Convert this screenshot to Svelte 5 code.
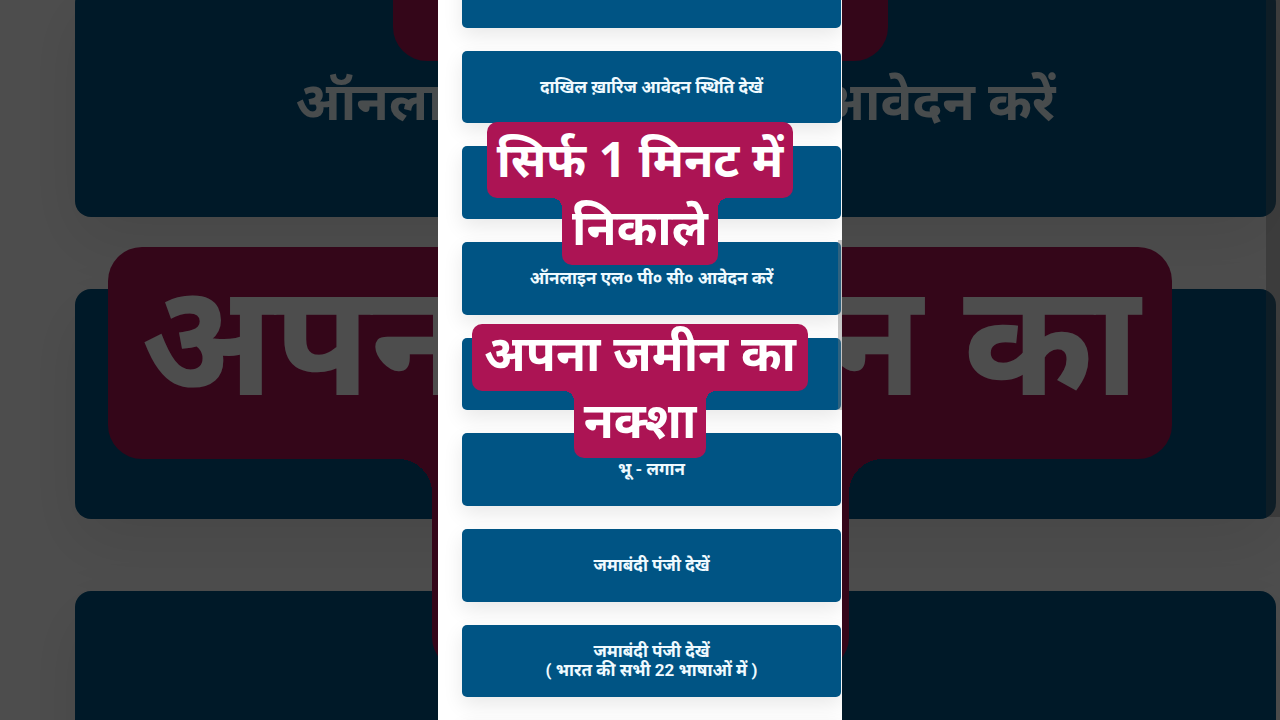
<script>
  const services = [
    [],
    ['दाखिल ख़ारिज आवेदन स्थिति देखें'],
    [],
    ['ऑनलाइन एल० पी० सी० आवेदन करें'],
    [],
    ['भू - लगान'],
    ['जमाबंदी पंजी देखें'],
    ['जमाबंदी पंजी देखें', '( भारत की सभी 22 भाषाओं में )'],
    []
  ];

  const title = [
    { text: 'सिर्फ 1 मिनट में', width: 306, kind: 'tall' },
    { text: 'निकाले', width: 156, kind: 'join' },
    { text: 'अपना जमीन का', width: 336, kind: 'next' },
    { text: 'नक्शा', width: 132, kind: 'join' }
  ];

  // enlarged copy behind the phone
  const backServices = [['ऑनलाइन एल० पी० सी० आवेदन करें'], [], []];
  const backTitle = [
    { text: '', width: 495, kind: 'join' },
    { text: 'अपना जमीन का', width: 1064, kind: 'next' },
    { text: '', width: 417, kind: 'join' }
  ];
</script>

{#snippet screen(cards, lines)}
  <div class="cards">
    {#each cards as rows}
      {#if rows.length}
        <a class="card" href="#service">
          {#each rows as row}
            <span>{row}</span>
          {/each}
        </a>
      {:else}
        <div class="card"></div>
      {/if}
    {/each}
  </div>
  <div class="scrollbar"></div>
  <div class="title">
    {#each lines as line}
      <div class="line {line.kind}" style:width="{line.width}px">{line.text}</div>
    {/each}
  </div>
{/snippet}

<main>
  <div class="backdrop" aria-hidden="true">
    {@render screen(backServices, backTitle)}
  </div>
  <section class="phone">
    {@render screen(services, title)}
  </section>
</main>

<style>
  :global(body) {
    background: #000;
  }

  main {
    position: relative;
    display: grid;
    grid-template-columns: 1fr 404px 1fr;
    height: 100vh;
    overflow: hidden;
    font-family: "Noto Sans", "Noto Sans Devanagari", sans-serif;
    font-weight: 700;
  }

  .phone,
  .backdrop {
    overflow: hidden;
    background: #fff;
  }

  .phone {
    --height: 73px;
    --gap: 23px;
    --radius: 5px;
    --text: 17px;
    --leading: 19px;
    --shadow: 0 8px 20px rgba(0, 0, 0, 0.09);
    --start: -45px;
    --end: -73px;
    --left: 24px;
    --right: 1px;
    --bar: 4px;
    --bar-top: 240px;
    --bar-height: 170px;
    --title: 49px;
    --title-top: 122px;
    --line: 67px;
    --leading-title: 57px;
    --line-gap: 59px;
    --curve: 10px;
    position: relative;
    grid-column: 2;
  }

  .backdrop {
    --height: 230px;
    --gap: 72px;
    --radius: 16px;
    --text: 53px;
    --leading: 60px;
    --shadow: 0 24px 64px rgba(0, 0, 0, 0.09);
    --start: -13px;
    --end: -101px;
    --left: 75px;
    --right: 4px;
    --bar: 14px;
    --bar-top: 0px;
    --bar-height: 517px;
    --title: 157px;
    --title-top: -151px;
    --line: 212px;
    --leading-title: 174px;
    --line-gap: 186px;
    --curve: 34px;
    position: absolute;
    inset: 0;
    opacity: 0.3;
  }

  .cards {
    display: flex;
    flex-direction: column;
    gap: var(--gap);
    box-sizing: border-box;
    height: calc(100% - var(--start) - var(--end));
    margin-top: var(--start);
    padding: 0 var(--right) 0 var(--left);
  }

  .card {
    display: flex;
    flex: 1 1 var(--height);
    flex-direction: column;
    align-items: center;
    justify-content: center;
    border-radius: var(--radius);
    background: #005484;
    box-shadow: var(--shadow);
    color: #effaff;
    font-family: Roboto, "Noto Sans", "Noto Sans Devanagari", sans-serif;
    font-size: var(--text);
    line-height: var(--leading);
    text-decoration: none;
    white-space: nowrap;
  }

  .scrollbar {
    position: absolute;
    top: var(--bar-top);
    right: 0;
    width: var(--bar);
    height: var(--bar-height);
    background: rgba(120, 120, 120, 0.4);
  }

  .title {
    position: absolute;
    inset: 0;
    display: flex;
    flex-direction: column;
    align-items: center;
    margin-top: var(--title-top);
    color: #fff;
    font-size: var(--title);
    line-height: var(--leading-title);
    text-align: center;
    white-space: nowrap;
  }

  .line {
    position: relative;
    flex: none;
    height: var(--line);
    border-radius: var(--curve);
    background: #ac1454;
  }

  .tall {
    height: 76px;
    font-size: 48px;
    line-height: 74px;
  }

  .next {
    margin-top: var(--line-gap);
  }

  .join {
    border-radius: 0 0 var(--curve) var(--curve);
  }

  /* inward corners where a narrow line hangs below a wide one */
  .join::before,
  .join::after {
    content: "";
    position: absolute;
    top: 0;
    width: var(--curve);
    height: var(--curve);
  }

  .join::before {
    right: 100%;
    background: radial-gradient(circle at 0 100%, transparent var(--curve), #ac1454 var(--curve));
  }

  .join::after {
    left: 100%;
    background: radial-gradient(circle at 100% 100%, transparent var(--curve), #ac1454 var(--curve));
  }
</style>
